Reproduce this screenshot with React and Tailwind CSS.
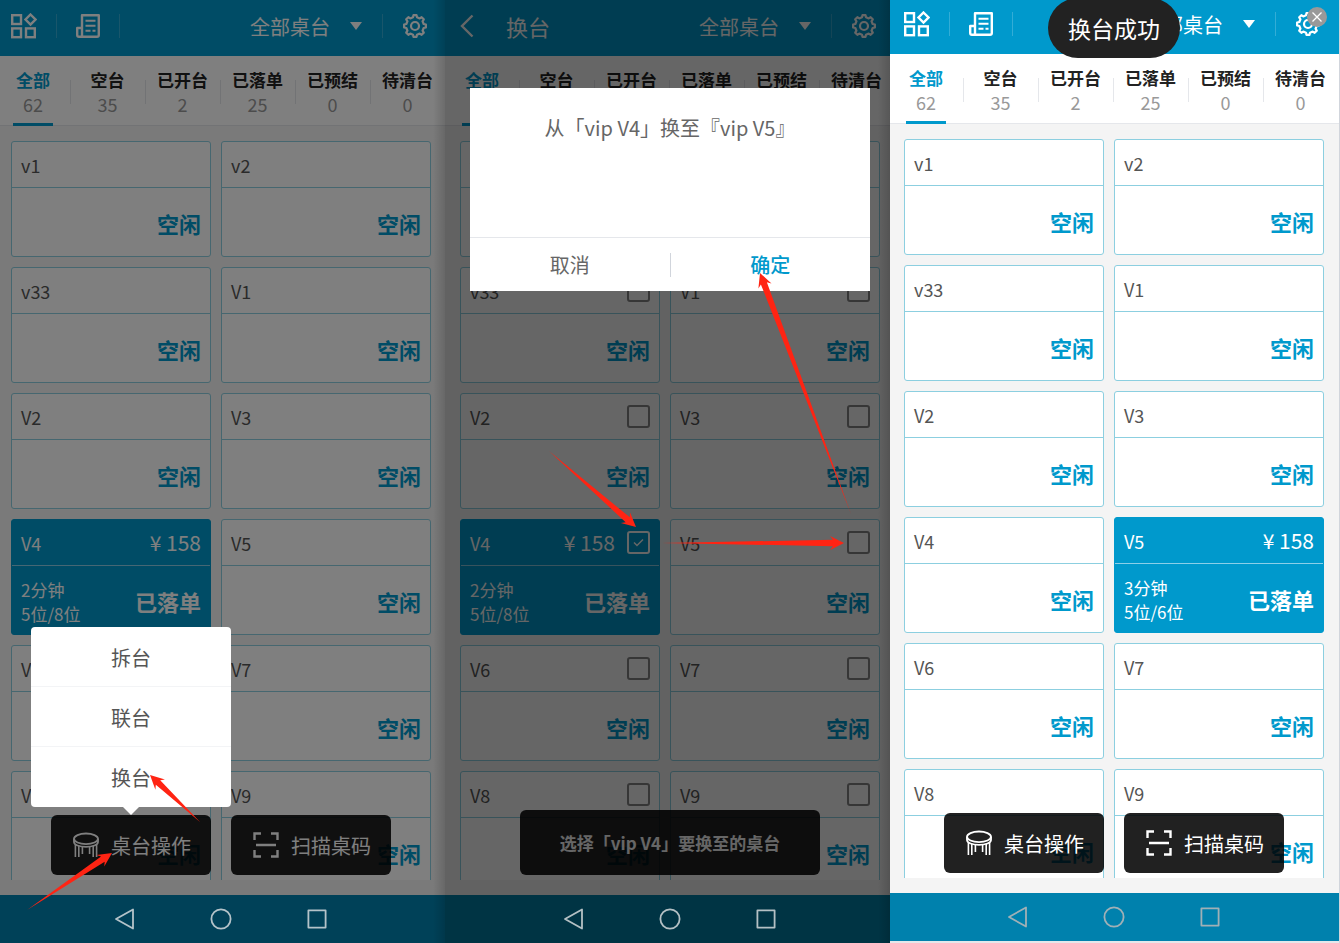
import clsx from 'clsx';

const TABS = [
  { name: '全部', count: 62 },
  { name: '空台', count: 35 },
  { name: '已开台', count: 2 },
  { name: '已落单', count: 25 },
  { name: '已预结', count: 0 },
  { name: '待清台', count: 0 },
];

const TABLE_NAMES = ['v1', 'v2', 'v33', 'V1', 'V2', 'V3', 'V4', 'V5', 'V6', 'V7', 'V8', 'V9'];

const ARROWS = [
  { from: [27, 910], to: [112, 853] },
  { from: [200, 822], to: [150, 775] },
  { from: [549, 451], to: [636, 527] },
  { from: [662, 543], to: [844, 543] },
  { from: [851, 514], to: [760, 273] },
];

// eight blunt teeth around the centre of a 24x24 box
const GEAR_POINTS = Array.from({ length: 8 }, (_, i) =>
  [
    [-13, 8.9],
    [-8, 11],
    [8, 11],
    [13, 8.9],
  ].map(([offset, r]) => {
    const a = ((i * 45 + offset) * Math.PI) / 180;
    return `${12 + r * Math.sin(a)},${12 - r * Math.cos(a)}`;
  })
)
  .flat()
  .join(' ');

const AppsIcon = () => (
  <svg className="w-[26px] h-[26px]" viewBox="0 0 26 26" fill="none" stroke="currentColor" strokeWidth="2.4">
    <rect x="1.2" y="2.2" width="8.8" height="8.8" />
    <rect x="1.2" y="15.4" width="8.8" height="8.8" />
    <rect x="15" y="15.4" width="8.8" height="8.8" />
    <path d="M19.500 1.500l5 5-5 5-5-5z" />
  </svg>
);

const ReceiptIcon = () => (
  <svg className="w-6 h-6" viewBox="0 0 24 24" fill="none" stroke="currentColor" strokeWidth="2.4">
    <path d="M6 22.800V1.200h16.800V21a1.800 1.800 0 0 1-1.800 1.800H3A1.800 1.800 0 0 1 1.200 21v-7H6" strokeLinejoin="round" />
    <path d="M9.500 6.800h10M9.500 11.800h10M9.500 16.800h5M16.500 16.800h3" strokeWidth="2" />
  </svg>
);

const GearIcon = () => (
  <svg className="w-6 h-6" viewBox="0 0 24 24" fill="none" stroke="currentColor" strokeWidth="2.2" strokeLinejoin="round">
    <polygon points={GEAR_POINTS} />
    <circle cx="12" cy="12" r="4" />
  </svg>
);

const StoolIcon = () => (
  <svg className="w-[26px] h-[26px]" viewBox="0 0 26 26" fill="none" stroke="currentColor" strokeWidth="1.8">
    <ellipse cx="13" cy="6.800" rx="12" ry="5.300" />
    <path d="M1 6.800v3.200c0 2.900 5.400 4.800 12 4.800s12-1.900 12-4.800V6.800" />
    <path d="M2.400 12.500V25M5.800 14V25M20.200 14V25M23.600 12.500V25M9.400 15v7M16.600 15v7" strokeWidth="1.600" />
  </svg>
);

const ScanIcon = () => (
  <svg className="w-[26px] h-[26px]" viewBox="0 0 26 26" fill="none" stroke="currentColor" strokeWidth="2.4">
    <path d="M1.500 8V1.500H8M18 1.500h6.500V8M24.500 18v6.500H18M8 24.500H1.500V18M3 13h20" />
  </svg>
);

const Divider = () => <span className="w-px h-6 bg-white/20" />;

const Header = ({ inset, title }) => (
  <header className="bg-[#0099cc] text-white">
    <div className={clsx('flex items-center justify-between h-14 pb-1 pl-[11px] pr-[18px]', inset)}>
      {title ? (
        <div className="flex items-center gap-5">
          <button aria-label="返回">
            <svg className="w-[26px] h-6" viewBox="0 0 26 24" fill="none" stroke="currentColor" strokeWidth="2.4">
              <path d="M12.500 1.500L2 12l10.500 10.500" />
            </svg>
          </button>
          <h1 className="text-[22px]">{title}</h1>
        </div>
      ) : (
        <div className="flex items-center gap-[19px]">
          <button aria-label="应用"><AppsIcon /></button>
          <Divider />
          <button aria-label="订单"><ReceiptIcon /></button>
          <Divider />
        </div>
      )}
      <div className="flex items-center gap-5">
        <div className="relative flex items-center">
          <select aria-label="区域" className="appearance-none bg-transparent pt-0.5 pr-8 text-xl">
            <option>全部桌台</option>
          </select>
          <svg className="absolute right-0 w-3 h-2 pointer-events-none" viewBox="0 0 12 8" fill="currentColor">
            <path d="M0 0h12L6 8z" />
          </svg>
        </div>
        <Divider />
        <button aria-label="设置"><GearIcon /></button>
      </div>
    </div>
  </header>
);

const Tabs = ({ inset }) => (
  <nav className="bg-white border-b border-gray-200">
    <div className={clsx('flex items-center h-[69px] pt-0.5', inset)}>
      {TABS.map((tab, i) => (
        <button
          key={tab.name}
          className={clsx(
            'relative flex flex-col items-center text-[17px] leading-6',
            i === 0 ? 'flex-[66] mr-1 text-[#0099cc]' : 'flex-[75] text-[#222]'
          )}
        >
          {i > 0 && <span className="absolute left-0 top-3 w-px h-6 bg-gray-200" />}
          <span className="font-bold">{tab.name}</span>
          <span className="text-lg leading-6 text-[#999]">{tab.count}</span>
          {i === 0 && <span className="absolute -bottom-2.5 w-10 h-[3px] bg-[#0099cc]" />}
        </button>
      ))}
    </div>
  </nav>
);

const TableCard = ({ name, order, selectable }) => (
  <article
    className={clsx(
      'h-[116px] border rounded-[3px]',
      order ? 'bg-[#0099cc] border-[#0099cc] text-white' : 'bg-white border-[#8ccfe0] text-[#555]'
    )}
  >
    <div
      className={clsx(
        'flex items-center h-[46px] px-[9px] border-b',
        order ? 'border-[#8ccfe8]' : 'border-[#8ccfe0]'
      )}
    >
      <h2 className="flex-1 text-lg">{name}</h2>
      {order && <span className="text-[21px]">¥ 158</span>}
      {selectable && (
        <span className="relative ml-3 flex">
          <input
            type="checkbox"
            aria-label={name}
            defaultChecked={Boolean(order)}
            className={clsx(
              'appearance-none w-[23px] h-[23px] border-2 rounded-[3px]',
              order ? 'border-white' : 'border-[#888]'
            )}
          />
          {order && (
            <svg className="absolute inset-0 w-full h-full p-1.5 pointer-events-none" viewBox="0 0 11 11" fill="none" stroke="currentColor" strokeWidth="1.5">
              <path d="M1 5.500l3 3 6-6" />
            </svg>
          )}
        </span>
      )}
    </div>
    <div className="flex items-center justify-between h-[68px] px-[9px]">
      <div className="pt-1 text-[17px] leading-6">
        {order && (
          <>
            <p>{order.time}</p>
            <p>{order.seats}</p>
          </>
        )}
      </div>
      <strong className={clsx('pt-0.5 text-[22px]', !order && 'text-[#0099cc]')}>
        {order ? '已落单' : '空闲'}
      </strong>
    </div>
  </article>
);

const ActionButton = ({ icon, children }) => (
  <button className="flex flex-1 items-center h-[60px] pl-[22px] gap-3 rounded-md bg-black/87 text-xl text-white">
    {icon}
    <span className="pt-0.5">{children}</span>
  </button>
);

const Actions = ({ inset }) => (
  <div className="absolute inset-x-0 bottom-5">
    <div className={clsx('flex gap-5 pl-[51px] pr-[54px]', inset)}>
      <ActionButton icon={<StoolIcon />}>桌台操作</ActionButton>
      <ActionButton icon={<ScanIcon />}>扫描桌码</ActionButton>
    </div>
  </div>
);

const SystemBar = ({ inset, className }) => (
  <footer className={className}>
    <div className={clsx('flex items-center justify-center gap-[74px] h-12 pr-1', inset)}>
      <svg className="w-[22px] h-[22px]" viewBox="0 0 22 22" fill="none" stroke="currentColor" strokeWidth="1.8" strokeLinejoin="round">
        <path d="M19 1.500v19L2 11z" />
      </svg>
      <svg className="w-[22px] h-[22px]" viewBox="0 0 22 22" fill="none" stroke="currentColor" strokeWidth="1.8">
        <circle cx="11" cy="11" r="9.600" />
      </svg>
      <svg className="w-[22px] h-[22px]" viewBox="0 0 22 22" fill="none" stroke="currentColor" strokeWidth="1.8" strokeLinejoin="round">
        <rect x="2.400" y="2.400" width="17.200" height="17.200" />
      </svg>
    </div>
  </footer>
);

const Screen = ({ inset, title, orders, selectable, dim, bar, bottom, children }) => (
  <section className="relative flex flex-col h-screen overflow-hidden bg-[#f4f4f4]">
    <div className="relative flex flex-col flex-1 min-h-0">
      <Header inset={inset} title={title} />
      <Tabs inset={inset} />
      <main className="flex-1 min-h-0 mb-[15px] overflow-hidden">
        <div className={clsx('grid grid-cols-[20fr_21fr] gap-2.5 pt-[15px] pl-[11px] pr-[14px]', inset)}>
          {TABLE_NAMES.map((name) => (
            <TableCard key={name} name={name} order={orders[name]} selectable={selectable} />
          ))}
        </div>
      </main>
      {bottom}
      {dim && <div className={clsx('absolute inset-0', dim)} />}
      {children}
    </div>
    <SystemBar inset={inset} className={bar} />
    {dim && <div className="absolute inset-y-0 right-0 w-3 bg-linear-to-l from-black/15 to-transparent" />}
  </section>
);

const OperationMenu = () => (
  <div className="absolute left-[31px] bottom-[88px] w-[200px] rounded bg-white text-xl text-[#555]">
    {['拆台', '联台', '换台'].map((item) => (
      <button key={item} className="block w-full h-[60px] pt-0.5 border-b border-gray-100 last-of-type:border-b-0">
        {item}
      </button>
    ))}
    <svg className="absolute top-full left-[92px] w-4 h-2" viewBox="0 0 16 8" fill="white">
      <path d="M0 0h16L8 8z" />
    </svg>
  </div>
);

const ConfirmDialog = () => (
  <div role="dialog" className="absolute left-[25px] right-5 top-[88px] bg-white text-xl text-[#666]">
    <p className="h-[149px] pt-[26px] text-center">从「vip V4」换至『vip V5』</p>
    <div className="flex items-center h-[54px] border-t border-gray-200">
      <button className="flex-1">取消</button>
      <span className="w-px h-6 bg-gray-300" />
      <button className="flex-1 font-medium text-[#0099cc]">确定</button>
    </div>
  </div>
);

const Arrow = ({ from, to }) => {
  const len = Math.hypot(to[0] - from[0], to[1] - from[1]);
  const ux = (to[0] - from[0]) / len;
  const uy = (to[1] - from[1]) / len;
  // point `back` px behind the tip, `side` px off the axis
  const at = (back, side) => `${to[0] - ux * back - uy * side},${to[1] - uy * back + ux * side}`;
  const points = [from.join(), at(11, 3.2), at(14, 7), to.join(), at(14, -7), at(11, -3.2)].join(' ');
  return <polygon points={points} />;
};

export default function App() {
  return (
    <div className="relative grid grid-cols-[445fr_445fr_450fr] h-screen overflow-hidden font-['Noto_Sans_CJK_SC',sans-serif]">
      <Screen
        orders={{ V4: { time: '2分钟', seats: '5位/8位' } }}
        dim="bg-black/50"
        bar="bg-[#004158] text-[#b4c3c9]"
        bottom={<Actions />}
      >
        <OperationMenu />
      </Screen>

      <Screen
        inset="ml-1 -mr-1"
        title="换台"
        orders={{ V4: { time: '2分钟', seats: '5位/8位' } }}
        selectable
        dim="bg-black/60"
        bar="bg-[#003444] text-[#b4c0c4]"
        bottom={
          <div className="absolute left-[75px] right-[70px] bottom-5 flex items-center justify-center h-[65px] rounded-md bg-black/87 text-[17px] font-bold text-white">
            选择「vip V4」要换至的桌台
          </div>
        }
      >
        <ConfirmDialog />
      </Screen>

      <div className="h-screen overflow-hidden border-r border-gray-300 bg-gray-200">
        <div className="-mt-0.5">
          <Screen
            inset="ml-[3px] mr-px"
            orders={{ V5: { time: '3分钟', seats: '5位/6位' } }}
            bar="bg-[#0081ad] text-[#a0b0b6]"
            bottom={<Actions inset="ml-[3px] mr-px" />}
          >
            <div role="status" className="absolute top-0 left-[158px] flex items-center h-[60px] px-5 rounded-full bg-[#222] text-[23px] text-white">
              换台成功
            </div>
            <button aria-label="关闭" className="absolute top-[9px] right-3 w-5 h-5 rounded-full bg-[#999] text-white">
              <svg viewBox="0 0 20 20" fill="none" stroke="currentColor" strokeWidth="1.300">
                <path d="M5.500 5.500l9 9M14.500 5.500l-9 9" />
              </svg>
            </button>
          </Screen>
        </div>
      </div>

      <svg className="absolute inset-0 w-full h-full pointer-events-none" viewBox="0 0 1340 943" preserveAspectRatio="none" fill="#ff2413">
        {ARROWS.map((arrow) => (
          <Arrow key={arrow.to.join()} {...arrow} />
        ))}
      </svg>
    </div>
  );
}
